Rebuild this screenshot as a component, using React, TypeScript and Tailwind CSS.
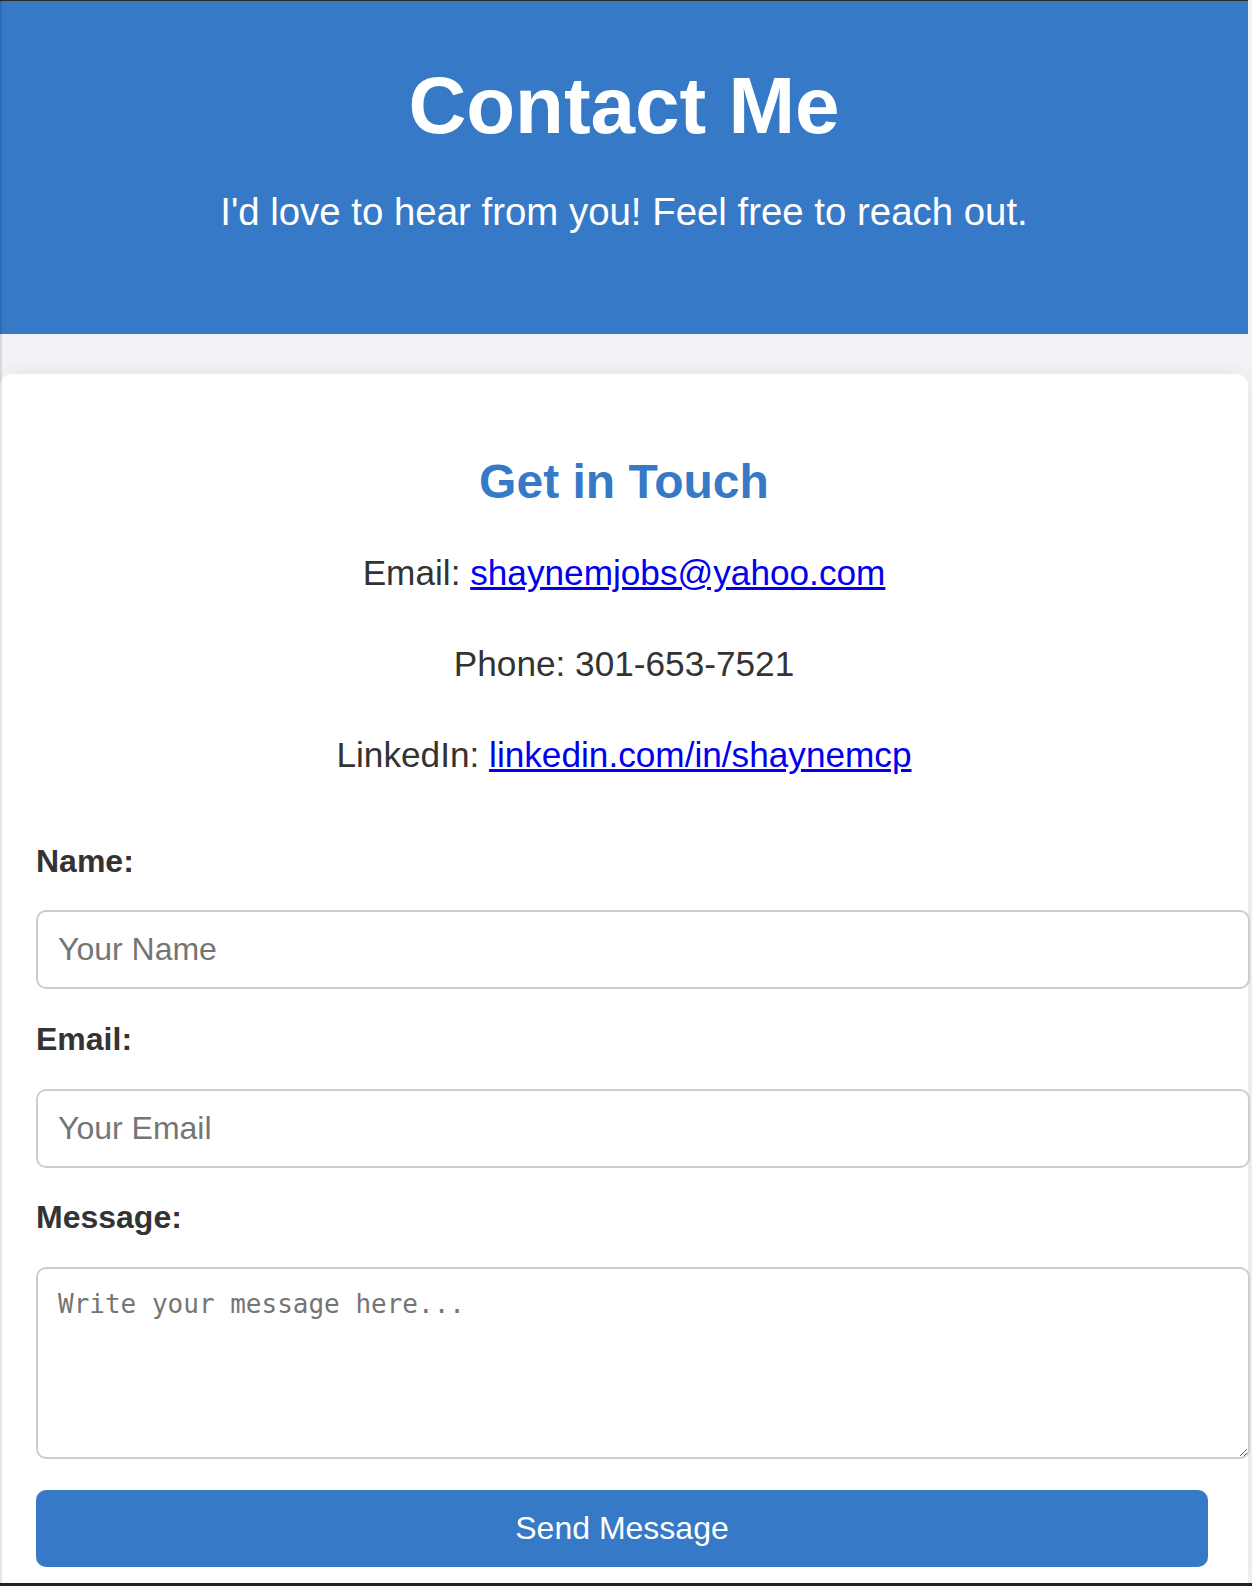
import { useState } from "react";

export default function App() {
  const [name, setName] = useState("");
  const [email, setEmail] = useState("");
  const [message, setMessage] = useState("");

  return (
    <div className="relative flex h-[1586px] flex-col overflow-hidden bg-[#f3f3f7] font-['Liberation_Sans',Arial,sans-serif] text-[#333]">
      {/* window edge shade */}
      <div className="pointer-events-none absolute left-0 top-0 bottom-0 w-[2px] bg-black/10" />

      {/* Header */}
      <header className="h-[334px] w-[1248px] border-t border-[#2b2b2b] bg-[#3679c6] pt-[65px] text-center text-white">
        <h1 className="text-[80px] font-bold leading-none">Contact Me</h1>
        <p className="mt-[47px] text-[38.4px] leading-none">
          I'd love to hear from you! Feel free to reach out.
        </p>
      </header>

      {/* Card */}
      <main className="flex flex-1 flex-col pt-[40px]">
        <section className="flex-1 w-[1248px] rounded-t-[12px] bg-white px-[36px] pt-[84px] shadow-[0_0_20px_rgba(0,0,0,0.07)]">
          <h2 className="text-center text-[48px] font-bold leading-none text-[#3679c6]">
            Get in Touch
          </h2>
          <p className="mt-[49px] text-center text-[35.2px] leading-none">
            Email:{" "}
            <a href="mailto:shaynemjobs@yahoo.com" className="text-[#0000ee] underline">
              shaynemjobs@yahoo.com
            </a>
          </p>
          <p className="mt-[56px] text-center text-[35.2px] leading-none">Phone: 301-653-7521</p>
          <p className="mt-[56px] text-center text-[35.2px] leading-none">
            LinkedIn:{" "}
            <a href="#" className="text-[#0000ee] underline">
              linkedin.com/in/shaynemcp
            </a>
          </p>

          <form className="mt-[72px] flex flex-col" onSubmit={(e) => e.preventDefault()}>
            <label htmlFor="name" className="text-[32px] font-bold leading-none">
              Name:
            </label>
            <input
              id="name"
              type="text"
              value={name}
              onChange={(e) => setName(e.target.value)}
              placeholder="Your Name"
              className="mt-[33px] h-[79px] w-[1214px] rounded-[10px] border-2 border-[#ccc] bg-white px-[20px] text-[32px] outline-none placeholder:text-[#757575]"
            />

            <label htmlFor="email" className="mt-[34px] text-[32px] font-bold leading-none">
              Email:
            </label>
            <input
              id="email"
              type="email"
              value={email}
              onChange={(e) => setEmail(e.target.value)}
              placeholder="Your Email"
              className="mt-[34px] h-[79px] w-[1214px] rounded-[10px] border-2 border-[#ccc] bg-white px-[20px] text-[32px] outline-none placeholder:text-[#757575]"
            />

            <label htmlFor="message" className="mt-[33px] text-[32px] font-bold leading-none">
              Message:
            </label>
            <textarea
              id="message"
              value={message}
              onChange={(e) => setMessage(e.target.value)}
              placeholder="Write your message here..."
              className="mt-[34px] h-[192px] w-[1214px] resize rounded-[10px] border-2 border-[#ccc] bg-white px-[20px] py-[20px] font-['DejaVu_Sans_Mono',monospace] text-[26px] leading-[30px] outline-none placeholder:text-[#757575]"
            />

            <button
              type="submit"
              className="mt-[31px] h-[77px] w-[1172px] rounded-[10px] bg-[#3679c6] text-[32px] leading-none text-white"
            >
              Send Message
            </button>
          </form>
        </section>
      </main>

      <div className="h-[3px] bg-[#222]" />
    </div>
  );
}
